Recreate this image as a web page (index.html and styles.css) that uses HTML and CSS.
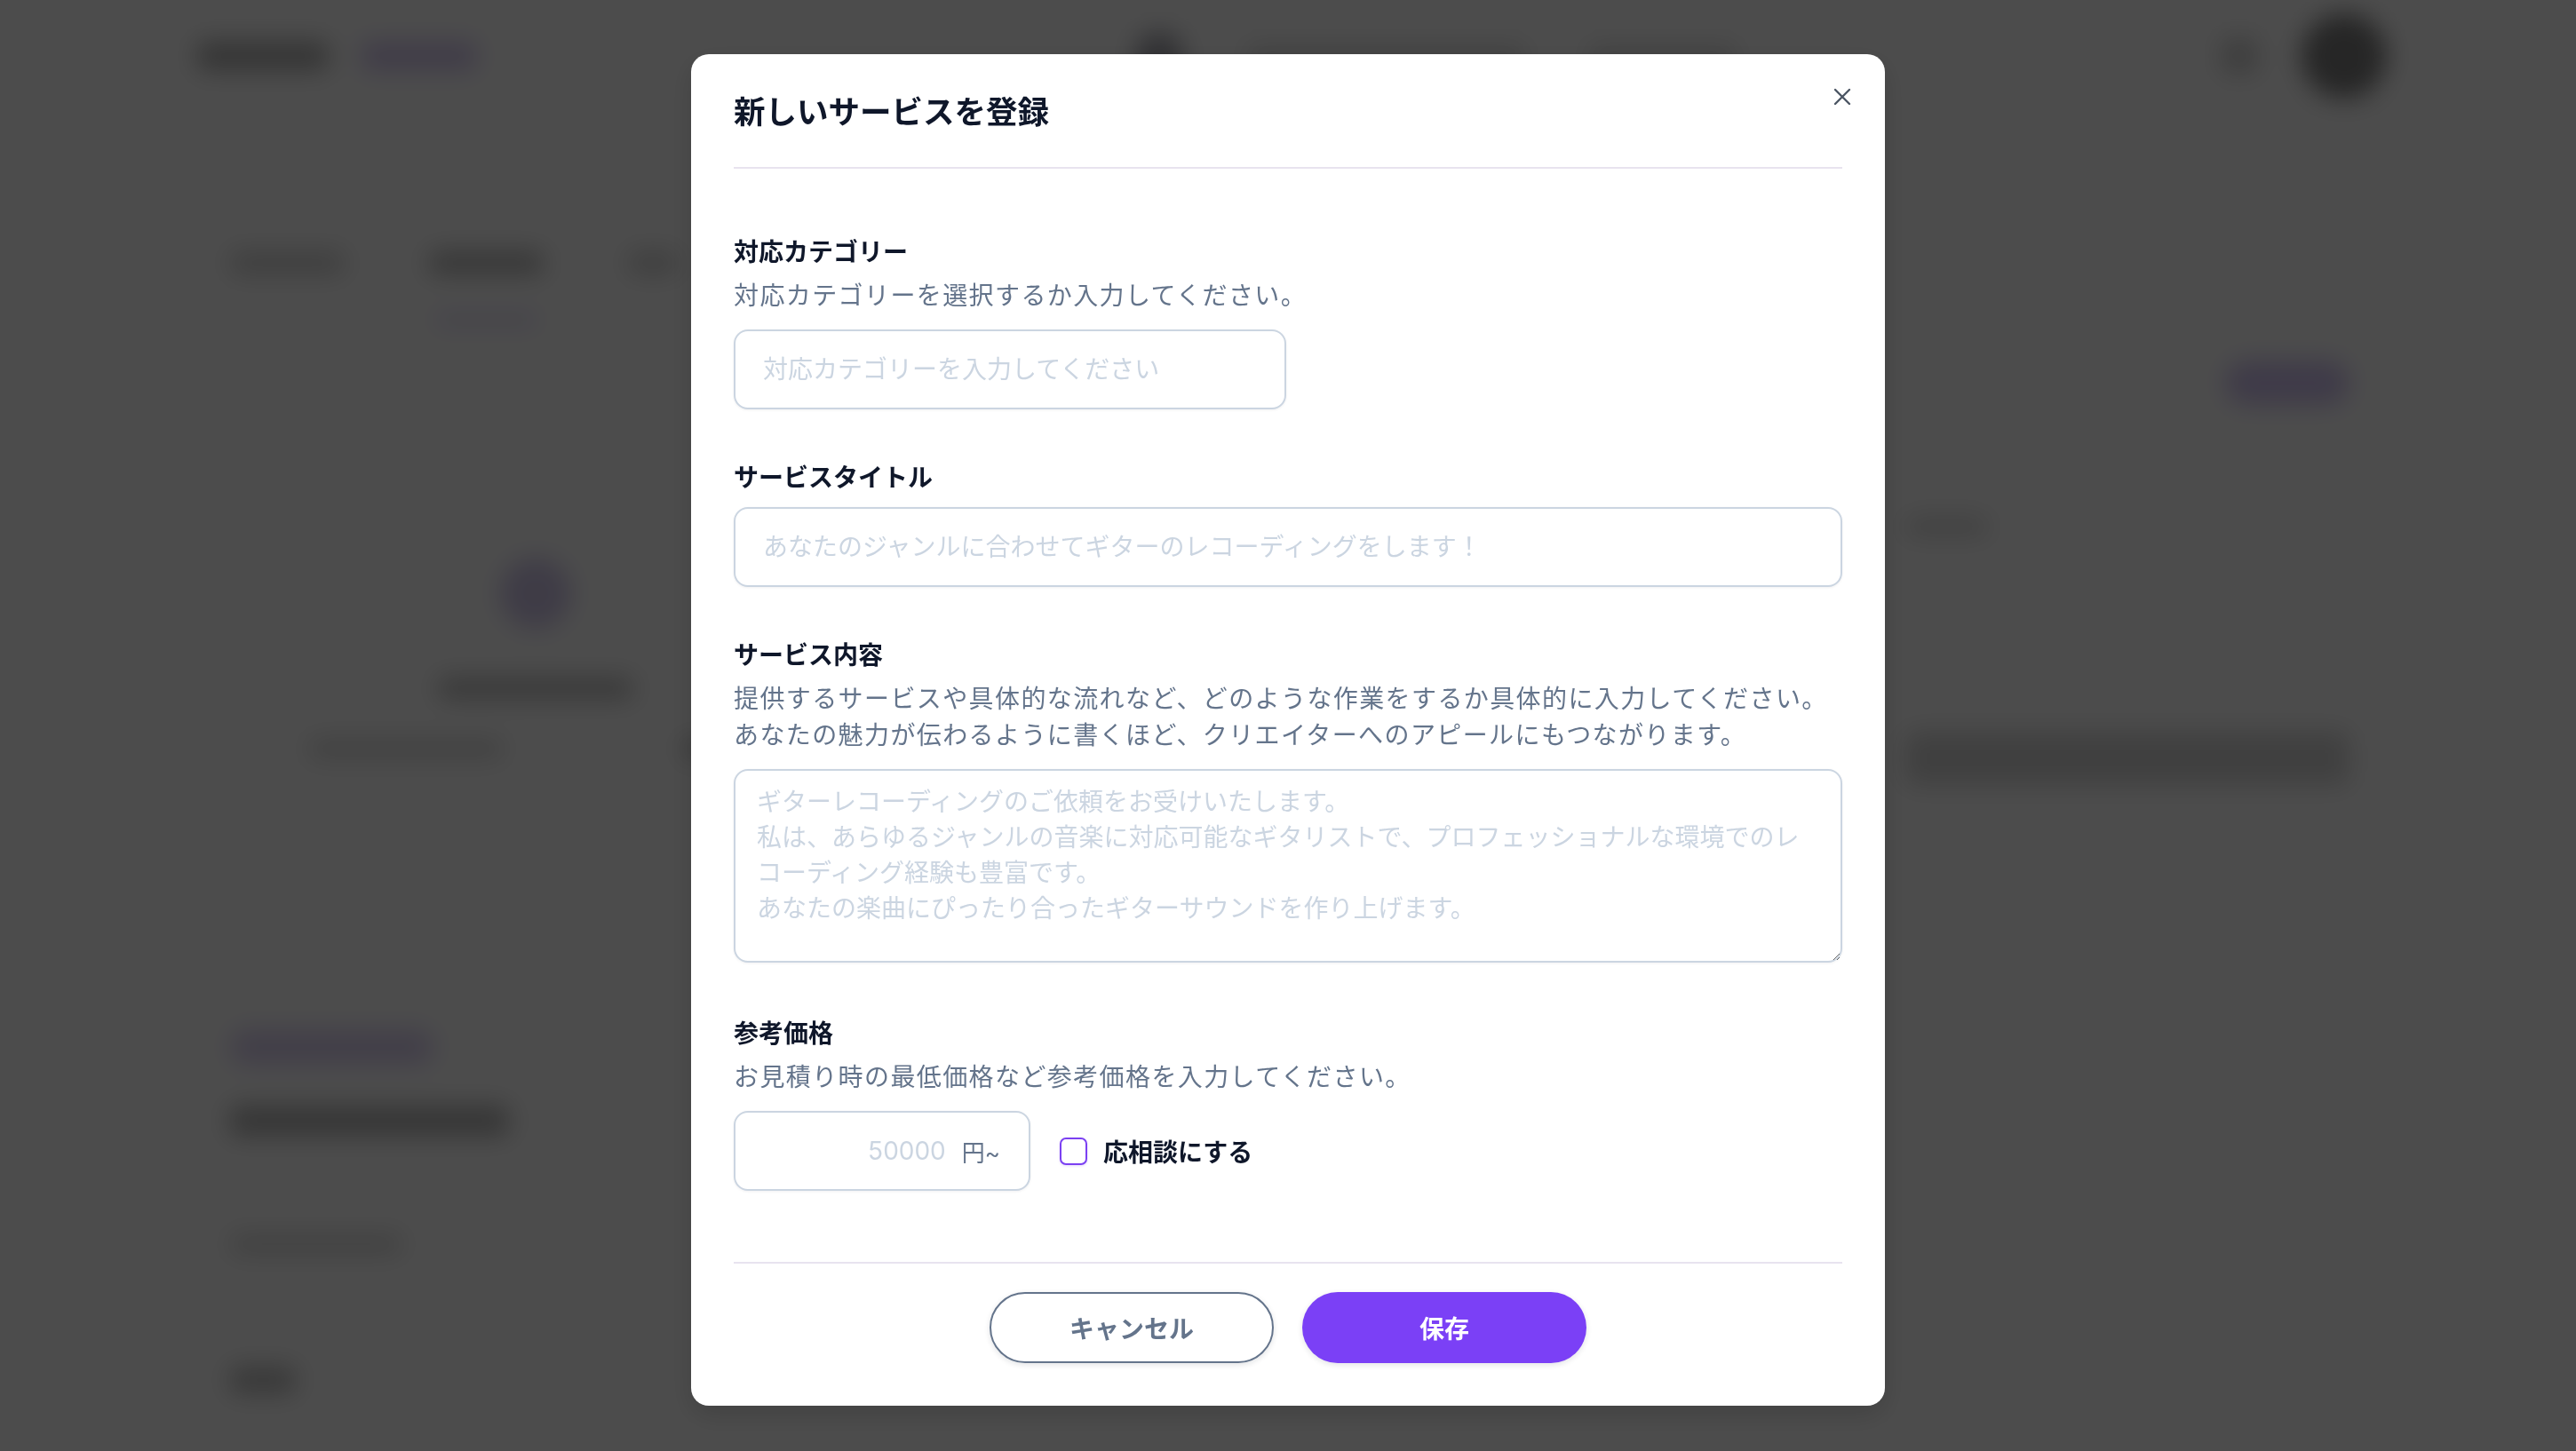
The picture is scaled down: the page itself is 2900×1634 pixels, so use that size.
FILE: index.html
```html
<!DOCTYPE html>
<html lang="ja">
<head>
<meta charset="UTF-8">
<meta name="viewport" content="width=device-width, initial-scale=1.0">
<title>新しいサービスを登録</title>
<link rel="stylesheet" href="styles.css">
</head>
<body>

<div class="page">
    <header class="topbar">
        <div class="brand">
            <span class="blob brand-mark"></span>
            <span class="blob brand-text"></span>
        </div>
        <nav class="nav">
            <span class="blob nav-icon"></span>
            <span class="blob nav-link wide"></span>
            <span class="blob nav-link"></span>
        </nav>
        <div class="user">
            <span class="blob bell"></span>
            <span class="blob avatar"></span>
        </div>
    </header>

    <main class="page-main">
        <div class="tabs">
            <span class="blob tab"></span>
            <span class="blob tab current"></span>
            <span class="blob tab small"></span>
        </div>
        <div class="toolbar">
            <span class="blob page-btn"></span>
        </div>
        <div class="card-row">
            <div class="card">
                <span class="blob card-icon"></span>
                <span class="blob card-title"></span>
                <div class="card-meta">
                    <span class="blob meta-line"></span>
                    <span class="blob meta-line short"></span>
                </div>
            </div>
            <div class="side-lines">
                <span class="blob side-line"></span>
                <span class="blob side-line long"></span>
            </div>
        </div>
        <div class="lower">
            <span class="blob pill"></span>
            <span class="blob heading"></span>
            <span class="blob text-line"></span>
            <span class="blob text-line last"></span>
        </div>
    </main>
</div>

<div class="overlay">
    <div class="modal" role="dialog" aria-labelledby="modalTitle">
        <button class="modal-close" type="button" aria-label="閉じる">
            <svg width="20" height="20" viewBox="0 0 20 20" fill="none" stroke="#4b5563" stroke-width="2.4" stroke-linecap="round">
                <path d="M2 2 L18 18 M18 2 L2 18"/>
            </svg>
        </button>

        <div class="modal-head">
            <h2 id="modalTitle">新しいサービスを登録</h2>
        </div>

        <form class="modal-body">
            <div class="field">
                <label class="field-label" for="category">対応カテゴリー</label>
                <p class="field-desc">対応カテゴリーを選択するか入力してください。</p>
                <input class="text-input short" type="text" id="category" placeholder="対応カテゴリーを入力してください">
            </div>

            <div class="field">
                <label class="field-label" for="title">サービスタイトル</label>
                <input class="text-input plain" type="text" id="title" placeholder="あなたのジャンルに合わせてギターのレコーディングをします！">
            </div>

            <div class="field">
                <label class="field-label" for="detail">サービス内容</label>
                <p class="field-desc">提供するサービスや具体的な流れなど、どのような作業をするか具体的に入力してください。<br>あなたの魅力が伝わるように書くほど、クリエイターへのアピールにもつながります。</p>
                <textarea class="text-area" id="detail" placeholder="ギターレコーディングのご依頼をお受けいたします。&#10;私は、あらゆるジャンルの音楽に対応可能なギタリストで、プロフェッショナルな環境でのレコーディング経験も豊富です。&#10;あなたの楽曲にぴったり合ったギターサウンドを作り上げます。"></textarea>
            </div>

            <div class="field price-field">
                <label class="field-label" for="price">参考価格</label>
                <p class="field-desc">お見積り時の最低価格など参考価格を入力してください。</p>
                <div class="price-row">
                    <div class="price-box">
                        <input class="price-input" type="text" id="price" placeholder="50000">
                        <span class="price-unit">円~</span>
                    </div>
                    <label class="check">
                        <input type="checkbox" class="check-box">
                        <span>応相談にする</span>
                    </label>
                </div>
            </div>
        </form>

        <div class="modal-foot">
            <button class="btn btn-cancel" type="button">キャンセル</button>
            <button class="btn btn-save" type="button">保存</button>
        </div>
    </div>
</div>

</body>
</html>
```

FILE: styles.css
```css
html, body {
    margin: 0;
    padding: 0;
    height: 100%;
}

body {
    font-family: "Inter", "Noto Sans CJK JP", sans-serif;
    background: #ffffff;
    overflow: hidden;
}

/* blurred page behind the dialog */

.page {
    height: 100vh;
    background: #ffffff;
    filter: blur(14px);
}

.blob {
    display: block;
    background: #c4c4c4;
    border-radius: 10px;
}

.topbar {
    display: flex;
    align-items: center;
    height: 126px;
    padding: 0 213px 0 222px;
    border-bottom: 2px solid #f0f0f0;
}

.brand {
    display: flex;
    align-items: center;
    gap: 37px;
}

.brand-mark {
    width: 148px;
    height: 32px;
    background: #b0b0b0;
}

.brand-text {
    width: 130px;
    height: 32px;
    background: #d6c8f2;
}

.nav {
    display: flex;
    align-items: center;
    gap: 70px;
    margin-left: 740px;
}

.nav-icon {
    width: 56px;
    height: 56px;
    border-radius: 50%;
    background: #a8a8b0;
}

.nav-link {
    width: 168px;
    height: 22px;
    background: #dadada;
}

.nav-link.wide {
    width: 315px;
}

.user {
    display: flex;
    align-items: center;
    gap: 50px;
    margin-left: auto;
}

.bell {
    width: 40px;
    height: 40px;
    background: #cfcfcf;
}

.avatar {
    width: 96px;
    height: 96px;
    border-radius: 50%;
    background: #808080;
}

.page-main {
    padding: 0 255px 0 259px;
}

.tabs {
    display: flex;
    align-items: center;
    gap: 95px;
    margin-top: 155px;
}

.tab {
    width: 129px;
    height: 26px;
    background: #d2d2d2;
}

.tab.current {
    background: #b8b8b8;
    box-shadow: 0 64px 0 -8px #d8ccf4;
}

.tab.small {
    width: 56px;
}

.toolbar {
    display: flex;
    justify-content: flex-end;
    margin-top: 97px;
}

.page-btn {
    width: 140px;
    height: 50px;
    background: #d2c4f2;
    border-radius: 25px;
}

.card-row {
    display: flex;
    justify-content: space-between;
    margin-top: 90px;
}

.card {
    display: flex;
    flex-direction: column;
    align-items: center;
    width: 684px;
    padding: 80px 0 40px;
    border: 2px solid #ececec;
    border-radius: 16px;
}

.card-icon {
    width: 80px;
    height: 80px;
    border-radius: 50%;
    background: #d2c8ec;
}

.card-title {
    width: 220px;
    height: 24px;
    margin-top: 55px;
    background: #bdbdbd;
}

.card-meta {
    display: flex;
    gap: 200px;
    margin-top: 46px;
}

.meta-line {
    width: 220px;
    height: 20px;
    background: #d6d6d6;
}

.meta-line.short {
    width: 92px;
    background: #c2c2c2;
}

.side-lines {
    display: flex;
    flex-direction: column;
    align-items: flex-start;
    gap: 220px;
    padding-top: 36px;
}

.side-line {
    width: 93px;
    height: 22px;
    background: #dadada;
}

.side-line.long {
    width: 500px;
    height: 60px;
    background: #d6d6d6;
}

.lower {
    display: flex;
    flex-direction: column;
    align-items: flex-start;
    margin-top: 264px;
}

.pill {
    width: 230px;
    height: 40px;
    border-radius: 20px;
    background: #ddd2f4;
}

.heading {
    width: 314px;
    height: 34px;
    margin-top: 46px;
    background: #b4b4b4;
}

.text-line {
    width: 194px;
    height: 22px;
    margin-top: 111px;
    background: #d8d8d8;
}

.text-line.last {
    width: 74px;
    height: 30px;
    margin-top: 127px;
    background: #bcbcbc;
}

/* dialog */

.overlay {
    position: fixed;
    inset: 0;
    display: flex;
    justify-content: center;
    align-items: flex-start;
    padding-top: 61px;
    background: rgba(0, 0, 0, 0.7);
}

.modal {
    position: relative;
    width: 1344px;
    box-sizing: border-box;
    padding: 0 48px;
    background: #ffffff;
    border-radius: 20px;
    box-shadow: 0 10px 30px rgba(0, 0, 0, 0.15);
}

.modal-close {
    position: absolute;
    top: 28px;
    right: 28px;
    width: 40px;
    height: 40px;
    display: flex;
    align-items: center;
    justify-content: center;
    padding: 0;
    border: none;
    background: none;
    cursor: pointer;
}

.modal-head {
    padding: 40px 0 35px;
    border-bottom: 2px solid #e8e3ef;
}

.modal-head h2 {
    margin: 0;
    font-size: 35.5px;
    line-height: 52px;
    font-weight: 700;
    color: #0f172a;
}

.modal-body {
    padding-top: 73px;
}

.field + .field {
    margin-top: 56px;
}

.field.price-field {
    margin-top: 59px;
}

.field-label {
    display: block;
    font-size: 28px;
    line-height: 42px;
    font-weight: 600;
    color: #0f172a;
}

.field-desc {
    margin: 8px 0 0;
    font-size: 28px;
    line-height: 41px;
    letter-spacing: 1.4px;
    color: #64748b;
}

.text-input,
.text-area,
.price-box {
    box-sizing: border-box;
    border: 2px solid #cbd5e1;
    border-radius: 16px;
    background: #ffffff;
    box-shadow: 0 1px 3px rgba(15, 23, 42, 0.06);
    font-family: inherit;
    font-size: 28px;
    color: #0f172a;
}

.text-input {
    display: block;
    width: 100%;
    height: 90px;
    margin-top: 17px;
    padding: 0 31px;
    outline: none;
}

.text-input.short {
    width: 622px;
}

.text-input.plain {
    margin-top: 12px;
}

.text-area {
    display: block;
    width: 100%;
    height: 218px;
    margin-top: 17px;
    padding: 15px 24px;
    line-height: 40px;
    resize: vertical;
    outline: none;
}

.text-input::placeholder,
.text-area::placeholder,
.price-input::placeholder {
    color: #cbd5e1;
    opacity: 1;
}

.price-row {
    display: flex;
    align-items: center;
    margin-top: 17px;
}

.price-box {
    display: flex;
    align-items: center;
    width: 334px;
    height: 90px;
    padding: 0 32px 0 30px;
}

.price-input {
    flex: 1;
    min-width: 0;
    border: none;
    outline: none;
    padding: 0;
    font-family: inherit;
    font-size: 28px;
    text-align: right;
    color: #0f172a;
    background: transparent;
}

.price-unit {
    margin-left: 18px;
    font-size: 26px;
    color: #64748b;
}

.check {
    display: flex;
    align-items: center;
    gap: 18px;
    margin-left: 33px;
    font-size: 28px;
    font-weight: 600;
    color: #0f172a;
    cursor: pointer;
}

.check-box {
    appearance: none;
    margin: 0;
    width: 31px;
    height: 31px;
    border: 2px solid #7b40f2;
    border-radius: 7px;
    background: #ffffff;
    box-shadow: 0 1px 3px rgba(123, 64, 242, 0.2);
}

.modal-foot {
    display: flex;
    justify-content: center;
    gap: 32px;
    margin-top: 80px;
    padding: 32px 0 48px;
    border-top: 2px solid #e8e3ef;
}

.btn {
    width: 320px;
    height: 80px;
    border-radius: 40px;
    font-family: inherit;
    font-size: 28px;
    font-weight: 700;
    cursor: pointer;
    box-shadow: 0 2px 6px rgba(15, 23, 42, 0.12);
}

.btn-cancel {
    border: 2px solid #64748b;
    background: #ffffff;
    color: #64748b;
}

.btn-save {
    border: none;
    background: #7b40f6;
    color: #ffffff;
}
```
